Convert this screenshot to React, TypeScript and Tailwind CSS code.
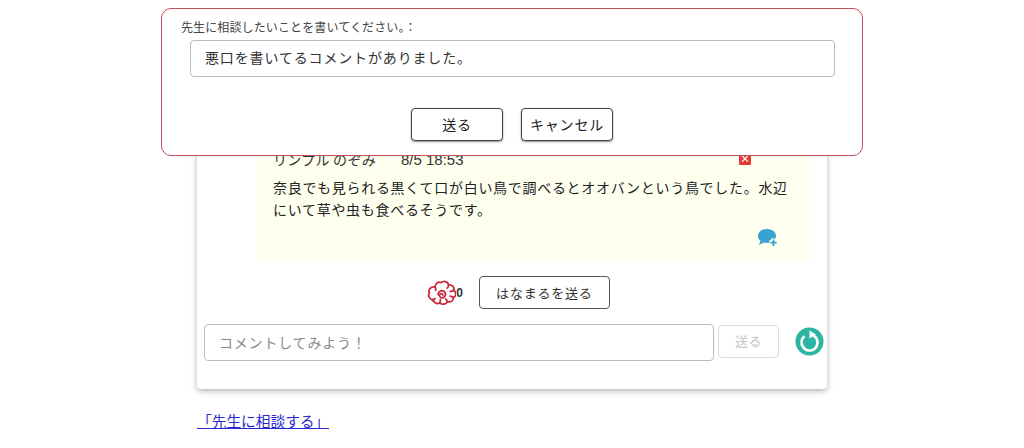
import React from "react";

const jp = { fontFamily: '"Noto Sans CJK JP", "Liberation Sans", sans-serif' };
const latin = { fontFamily: '"Liberation Sans", sans-serif' };

const Flower = () => (
  <svg width="30" height="26" viewBox="1 0 27 24" fill="none" stroke="#c8283c" strokeWidth="1.600" strokeLinecap="round">
    <path d="M9 6.500C9 3 12 1.200 14.500 2.500 16.500.5 21 1 21.500 4.500c3-.6 5.800 2 4.600 5 2.600 1.400 2.800 5.400-.2 6.700.2 3-2.800 4.800-5.400 3.600-1 2.600-5.200 3.600-7 1.200-2.400 1.600-6 .2-6-2.800-3.400 0-5.600-3.600-3.600-6.400C2.200 9.200 5 6 9 6.500z" />
    <path d="M9 6.500c.6 1 .8 2 .6 3M21.500 4.500c0 1.200-.5 2.200-1.300 3M26.100 9.500c-1 .8-2 1.200-3.100 1.200M25.900 16.200c-1-.8-2-1.200-3-1.300M20.500 19.800c-.4-1-1-1.800-1.800-2.300M13.500 21c.4-1 .6-2 .4-3M6.500 19.200c.6-1 1.500-1.700 2.500-2" />
    <path d="M12 13.800c-.6-3 3-5 5.400-3.200 2.400 2 1 5.800-2 5.800-2 0-3-2.200-1.600-3.400 1-.8 2.400-.2 2.400.9" />
  </svg>
);

const CommentPlus = () => (
  <svg width="22" height="20" viewBox="0 0 22 20">
    <path
      d="M10 1C4.800 1 1 4 1 8c0 2 1 3.600 2.400 4.800-.2 1.500-1 2.800-2 3.700 2.200 0 4-.8 5.400-1.900 1 .3 2 .4 3.200.4 5.200 0 9-3 9-7S15.200 1 10 1z"
      fill="#38a3d1"
    />
    <path d="M16.500 10.500v8M12.500 14.500h8" stroke="#fffff0" strokeWidth="5" />
    <path d="M16.500 11.500v6.500M13.300 14.700h6.400" stroke="#38a3d1" strokeWidth="1.800" />
  </svg>
);

const Reload = () => (
  <svg width="29" height="29" viewBox="0 0 29 29">
    <circle cx="14.500" cy="14.500" r="14" fill="#2cb5a0" />
    <path d="M9.500 9.200a8 8 0 1 0 6-1.700" fill="none" stroke="#fff" strokeWidth="2.600" />
    <path d="M14.500 3.500l6.500 4-6.500 4z" fill="#fff" />
  </svg>
);

export default function App() {
  return (
    <div className="relative h-[448px] w-[1024px] overflow-hidden bg-white text-[#333]" style={jp}>
      {/* Comment card */}
      <div className="mx-auto mt-[20px] flex h-[369px] w-[630px] flex-col justify-end rounded-[4px] bg-white pb-[28px] pl-[7px] shadow-[0_2px_6px_rgba(0,0,0,0.3)]">
        <div className="ml-[52px] mr-[17px] bg-[#fffff0] px-[17px]">
          <div className="flex h-[22px] items-center text-[14px] leading-none">
            <span className="w-[128px] tracking-[0.02em]">リンプル のぞみ</span>
            <span className="text-[15px]" style={latin}>
              8/5 18:53
            </span>
            <span className="ml-auto mr-[42px] flex h-[12px] w-[12px] items-center justify-center rounded-[1px] bg-[#e53935] text-[10px] font-bold leading-none text-white">
              ×
            </span>
          </div>
          <p className="mt-[6px] text-[14px] leading-[22px] tracking-[0.7px] text-[#222]">
            奈良でも見られる黒くて口が白い鳥で調べるとオオバンという鳥でした。水辺にいて草や虫も食べるそうです。
          </p>
          <div className="mb-[13px] mt-[8px] flex justify-end pr-[14px]">
            <CommentPlus />
          </div>
        </div>

        <div className="mt-[15px] flex items-center justify-center pl-[5px]">
          <Flower />
          <span className="text-[12px] font-bold" style={latin}>
            0
          </span>
          <button className="ml-[16px] h-[33px] w-[131px] rounded-[4px] border border-[#555] bg-white text-[13px] tracking-[0.06em] text-[#333]">
            はなまるを送る
          </button>
        </div>

        <div className="mt-[15px] flex items-center">
          <div className="flex h-[37px] w-[510px] shrink-0 items-center rounded-[4px] border border-[#bbb] pl-[14px] text-[14px] tracking-[0.8px] text-[#8a8a8a]">
            コメントしてみよう！
          </div>
          <button className="mb-[3px] ml-[4px] h-[33px] w-[61px] shrink-0 rounded-[4px] border border-[#ddd] text-[13px] tracking-[0.04em] text-[#c4c4c4]">
            送る
          </button>
          <div className="mb-[3px] ml-[16px] shrink-0">
            <Reload />
          </div>
        </div>
      </div>

      <div className="ml-[197px] mt-[19px]">
        <a href="#" className="text-[14.7px] leading-[20px] text-[#2a2ad0] underline">
          「先生に相談する」
        </a>
      </div>

      {/* Consult dialog */}
      <div className="absolute left-[161px] top-[8px] h-[148px] w-[702px] rounded-[10px] border border-[#c0505c] bg-white">
        <p className="ml-[19px] mt-[10px] text-[12px] leading-[16px] tracking-[0.01em] text-[#444]">先生に相談したいことを書いてください。：</p>
        <div className="ml-[28px] mt-[5px] flex h-[37px] w-[645px] items-center rounded-[4px] border border-[#bbb] pb-[2px] pl-[14px] text-[14px] tracking-[0.85px] text-[#333]">
          悪口を書いてるコメントがありました。
        </div>
        <div className="mt-[31px] flex justify-center gap-[18px]">
          <button className="h-[33px] w-[92px] rounded-[4px] border border-[#444] bg-white text-[14px] tracking-[0.06em] text-[#222] shadow-[0_1px_2px_rgba(0,0,0,0.45)]">
            送る
          </button>
          <button className="h-[33px] w-[92px] rounded-[4px] border border-[#444] bg-white text-[14px] tracking-[0.06em] text-[#222] shadow-[0_1px_2px_rgba(0,0,0,0.45)]">
            キャンセル
          </button>
        </div>
      </div>
    </div>
  );
}
